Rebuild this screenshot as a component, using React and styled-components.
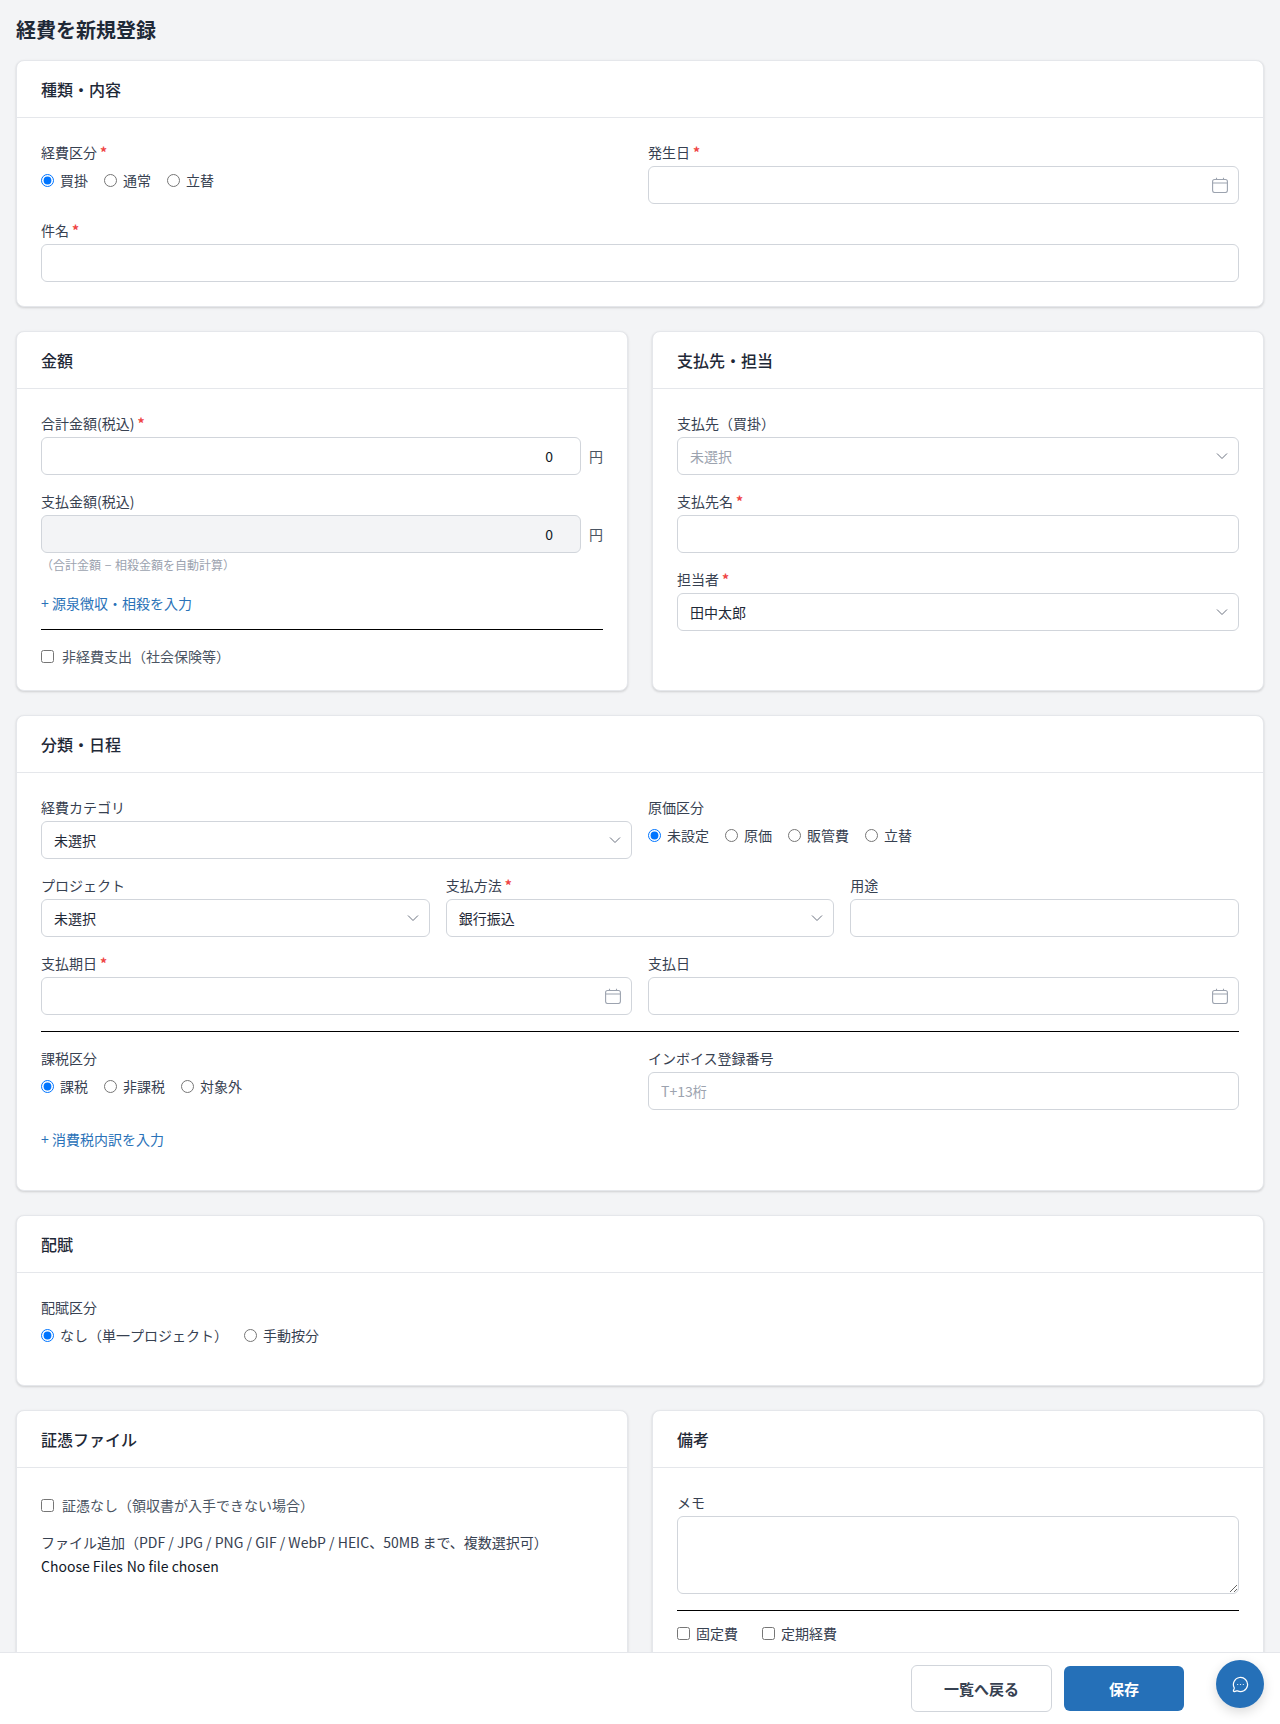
import React from "react";
import styled, { createGlobalStyle } from "styled-components";
import { MessageCircleMore } from "lucide-react";

const Global = createGlobalStyle`
  * { box-sizing: border-box; }
  html, body { margin: 0; padding: 0; height: 100%; }
  body {
    font-family: "Noto Sans CJK JP", "Noto Sans", sans-serif;
    font-size: 14px;
    line-height: 20px;
    color: #1f2937;
    background: #f3f4f6;
  }
  input, select, textarea, button { font-family: inherit; }
`;

const Shell = styled.div`
  height: 100vh;
  display: flex;
  flex-direction: column;
  overflow: hidden;
`;
const Main = styled.main`
  flex: 1;
  min-height: 0;
  overflow: hidden;
  padding: 16px;
`;
const Title = styled.h1`
  margin: 0 0 16px;
  font-size: 20px;
  line-height: 28px;
  font-weight: 700;
  color: #1f2937;
`;
const Stack = styled.div`
  display: flex;
  flex-direction: column;
  gap: 24px;
`;
const Pair = styled.div`
  display: grid;
  grid-template-columns: 1fr 1fr;
  gap: 24px;
`;
const Card = styled.section`
  background: #fff;
  border: 1px solid #e5e7eb;
  border-radius: 8px;
  box-shadow: 0 1px 3px rgba(0, 0, 0, 0.1), 0 1px 2px rgba(0, 0, 0, 0.06);
`;
const CardHead = styled.h2`
  margin: 0;
  padding: 16px 24px;
  height: 57px;
  border-bottom: 1px solid #e5e7eb;
  font-size: 16px;
  line-height: 24px;
  font-weight: 500;
  color: #1f2937;
`;
const CardBody = styled.div`
  padding: 24px;
`;
const Grid = styled.div`
  display: grid;
  grid-template-columns: repeat(${(p) => p.$cols || 2}, minmax(0, 1fr));
  column-gap: 16px;
  row-gap: 16px;
  & + & { margin-top: 16px; }
`;
const Field = styled.div`
  min-width: 0;
  grid-column: ${(p) => (p.$span ? `span ${p.$span}` : "auto")};
`;
const Fields = styled.div`
  display: flex;
  flex-direction: column;
  gap: 16px;
`;
const Label = styled.label`
  display: block;
  margin-bottom: 4px;
  font-size: 14px;
  line-height: 20px;
  color: #374151;
`;
const Req = styled.span`
  margin-left: 3px;
  color: #ef4444;
  font-weight: 700;
`;
const Control = styled.input`
  display: block;
  width: 100%;
  height: 38px;
  padding: 0 12px;
  border: 1px solid #d1d5db;
  border-radius: 6px;
  background: #fff;
  font-size: 14px;
  color: #1f2937;
  outline: none;
  &::placeholder { color: #9ca3af; }
`;
const Amount = styled(Control)`
  flex: 1;
  min-width: 0;
  text-align: right;
  padding-right: 27px;
  color: #111827;
  background: ${(p) => (p.$locked ? "#f3f4f6" : "#fff")};
`;
const AmountRow = styled.div`
  display: flex;
  align-items: center;
  gap: 8px;
`;
const Unit = styled.span`
  color: #4b5563;
`;
const Wrap = styled.div`
  position: relative;
`;
const Select = styled.select`
  display: block;
  width: 100%;
  height: 38px;
  padding: 0 32px 0 12px;
  border: 1px solid #d1d5db;
  border-radius: 6px;
  background: #fff;
  font-size: 14px;
  color: ${(p) => (p.$muted ? "#9ca3af" : "#1f2937")};
  appearance: none;
  outline: none;
`;
const IconSlot = styled.span`
  position: absolute;
  top: 11px;
  right: ${(p) => p.$right}px;
  width: 16px;
  height: 16px;
  display: block;
  pointer-events: none;
  svg { display: block; }
`;
const RadioRow = styled.div`
  display: flex;
  gap: 16px;
  margin-top: 8px;
`;
const OptionLabel = styled.label`
  display: inline-flex;
  align-items: center;
  gap: ${(p) => p.$gap || 6}px;
  font-size: 14px;
  line-height: 20px;
  color: ${(p) => p.$color || "#374151"};
  input { margin: 0; width: 13px; height: 13px; flex: none; }
`;
const Help = styled.p`
  margin: 4px 0 0;
  font-size: 12px;
  line-height: 16px;
  word-spacing: 1px;
  color: #9ca3af;
`;
const Link = styled.a`
  display: block;
  margin-top: ${(p) => p.$top}px;
  color: #2a72b8;
  font-size: 14px;
  line-height: 20px;
  text-decoration: none;
`;
const Rule = styled.hr`
  margin: 16px 0 ${(p) => p.$after ?? 16}px;
  height: 1px;
  border: 0;
  background: #000;
`;
const Check = styled.div`
  display: flex;
  gap: 24px;
  padding-top: ${(p) => p.$pad || 0}px;
  padding-bottom: ${(p) => p.$pad || 0}px;
`;
const FileLine = styled.div`
  margin-top: 4px;
  color: #111827;
  display: flex;
  gap: 4px;
`;
const UploadLabel = styled(Label)`
  margin-top: 14px;
`;
const Memo = styled.textarea`
  display: block;
  width: 100%;
  height: 78px;
  padding: 8px 12px;
  border: 1px solid #d1d5db;
  border-radius: 6px;
  background: #fff;
  outline: none;
  resize: vertical;
`;
const SpacedBody = styled(CardBody)`
  padding-bottom: ${(p) => p.$bottom}px;
`;
const Footer = styled.footer`
  flex: none;
  height: 72px;
  background: #fff;
  border-top: 1px solid #e5e7eb;
  display: flex;
  align-items: center;
  justify-content: flex-end;
  gap: 12px;
  padding-right: 96px;
`;
const BackButton = styled.button`
  width: 141px;
  height: 47px;
  border: 1px solid #d1d5db;
  border-radius: 6px;
  background: #fff;
  color: #374151;
  font-size: 15px;
  font-weight: 700;
`;
const SaveButton = styled.button`
  width: 120px;
  height: 45px;
  border: 0;
  border-radius: 6px;
  background: #2570b8;
  color: #fff;
  font-size: 15px;
  font-weight: 700;
`;
const ChatFab = styled.button`
  position: fixed;
  right: 16px;
  bottom: 16px;
  width: 48px;
  height: 48px;
  border: 0;
  border-radius: 50%;
  background: #2570b8;
  color: #fff;
  display: flex;
  align-items: center;
  justify-content: center;
  box-shadow: 0 4px 12px rgba(0, 0, 0, 0.15);
`;

const Calendar = () => (
  <svg width="16" height="16" viewBox="0 0 16 16" fill="none" stroke="#9ca3af" strokeWidth="1.1">
    <rect x="0.6" y="2.5" width="14.8" height="13" rx="2" />
    <path d="M0.6 6h14.8M4.5 0.8v1.7M11.5 0.8v1.7" />
  </svg>
);
const Chevron = () => (
  <svg width="16" height="16" viewBox="0 0 16 16" fill="none" stroke="#6b7280" strokeWidth="1">
    <path d="M3 5.5l5 5 5-5" />
  </svg>
);

const Head = ({ children, required }) => (
  <Label>
    {children}
    {required && <Req>*</Req>}
  </Label>
);
const DateField = ({ label, required }) => (
  <Field>
    <Head required={required}>{label}</Head>
    <Wrap>
      <Control type="text" />
      <IconSlot $right={11}><Calendar /></IconSlot>
    </Wrap>
  </Field>
);
const SelectField = ({ label, required, value, muted }) => (
  <Field>
    <Head required={required}>{label}</Head>
    <Wrap>
      <Select $muted={muted} defaultValue={value}>
        <option value={value}>{value}</option>
      </Select>
      <IconSlot $right={9}><Chevron /></IconSlot>
    </Wrap>
  </Field>
);
const TextField = ({ label, required, placeholder }) => (
  <Field>
    <Head required={required}>{label}</Head>
    <Control type="text" placeholder={placeholder} />
  </Field>
);
const RadioField = ({ label, required, name, options }) => (
  <Field>
    <Head required={required}>{label}</Head>
    <RadioRow>
      {options.map((o, i) => (
        <OptionLabel key={o}>
          <input type="radio" name={name} defaultChecked={i === 0} />
          {o}
        </OptionLabel>
      ))}
    </RadioRow>
  </Field>
);

export default function App() {
  return (
    <Shell>
      <Global />
      <Main>
        <Title>経費を新規登録</Title>
        <Stack>
          <Card>
            <CardHead>種類・内容</CardHead>
            <CardBody>
              <Grid>
                <RadioField label="経費区分" required name="kind" options={["買掛", "通常", "立替"]} />
                <DateField label="発生日" required />
                <Field $span={2}>
                  <Head required>件名</Head>
                  <Control type="text" />
                </Field>
              </Grid>
            </CardBody>
          </Card>

          <Pair>
            <Card>
              <CardHead>金額</CardHead>
              <CardBody>
                <Fields>
                  <Field>
                    <Head required>合計金額(税込)</Head>
                    <AmountRow>
                      <Amount type="text" defaultValue="0" />
                      <Unit>円</Unit>
                    </AmountRow>
                  </Field>
                  <Field>
                    <Head>支払金額(税込)</Head>
                    <AmountRow>
                      <Amount type="text" defaultValue="0" $locked readOnly />
                      <Unit>円</Unit>
                    </AmountRow>
                    <Help>（合計金額 − 相殺金額を自動計算）</Help>
                  </Field>
                </Fields>
                <Link $top={20}>+ 源泉徴収・相殺を入力</Link>
                <Rule />
                <Check>
                  <OptionLabel $gap={8} $color="#4b5563">
                    <input type="checkbox" />
                    非経費支出（社会保険等）
                  </OptionLabel>
                </Check>
              </CardBody>
            </Card>
            <Card>
              <CardHead>支払先・担当</CardHead>
              <CardBody>
                <Fields>
                  <SelectField label="支払先（買掛）" value="未選択" muted />
                  <TextField label="支払先名" required />
                  <SelectField label="担当者" required value="田中太郎" />
                </Fields>
              </CardBody>
            </Card>
          </Pair>

          <Card>
            <CardHead>分類・日程</CardHead>
            <SpacedBody $bottom={41}>
              <Grid>
                <SelectField label="経費カテゴリ" value="未選択" />
                <RadioField label="原価区分" name="cost" options={["未設定", "原価", "販管費", "立替"]} />
              </Grid>
              <Grid $cols={3}>
                <SelectField label="プロジェクト" value="未選択" />
                <SelectField label="支払方法" required value="銀行振込" />
                <TextField label="用途" />
              </Grid>
              <Grid>
                <DateField label="支払期日" required />
                <DateField label="支払日" />
              </Grid>
              <Rule />
              <Grid>
                <RadioField label="課税区分" name="tax" options={["課税", "非課税", "対象外"]} />
                <TextField label="インボイス登録番号" placeholder="T+13桁" />
              </Grid>
              <Link $top={19}>+ 消費税内訳を入力</Link>
            </SpacedBody>
          </Card>

          <Card>
            <CardHead>配賦</CardHead>
            <SpacedBody $bottom={40}>
              <RadioField label="配賦区分" name="alloc" options={["なし（単一プロジェクト）", "手動按分"]} />
            </SpacedBody>
          </Card>

          <Pair>
            <Card>
              <CardHead>証憑ファイル</CardHead>
              <CardBody>
                <Check $pad={3}>
                  <OptionLabel $gap={8} $color="#4b5563">
                    <input type="checkbox" />
                    証憑なし（領収書が入手できない場合）
                  </OptionLabel>
                </Check>
                <UploadLabel>ファイル追加（PDF / JPG / PNG / GIF / WebP / HEIC、50MB まで、複数選択可）</UploadLabel>
                <FileLine>
                  <span>Choose Files</span>
                  <span>No file chosen</span>
                </FileLine>
              </CardBody>
            </Card>
            <Card>
              <CardHead>備考</CardHead>
              <CardBody>
                <Field>
                  <Head>メモ</Head>
                  <Memo />
                </Field>
                <Rule $after={12} />
                <Check>
                  <OptionLabel>
                    <input type="checkbox" />
                    固定費
                  </OptionLabel>
                  <OptionLabel>
                    <input type="checkbox" />
                    定期経費
                  </OptionLabel>
                </Check>
              </CardBody>
            </Card>
          </Pair>
        </Stack>
      </Main>
      <Footer>
        <BackButton type="button">一覧へ戻る</BackButton>
        <SaveButton type="button">保存</SaveButton>
      </Footer>
      <ChatFab type="button" aria-label="chat">
        <MessageCircleMore size={17} strokeWidth={1.75} />
      </ChatFab>
    </Shell>
  );
}
